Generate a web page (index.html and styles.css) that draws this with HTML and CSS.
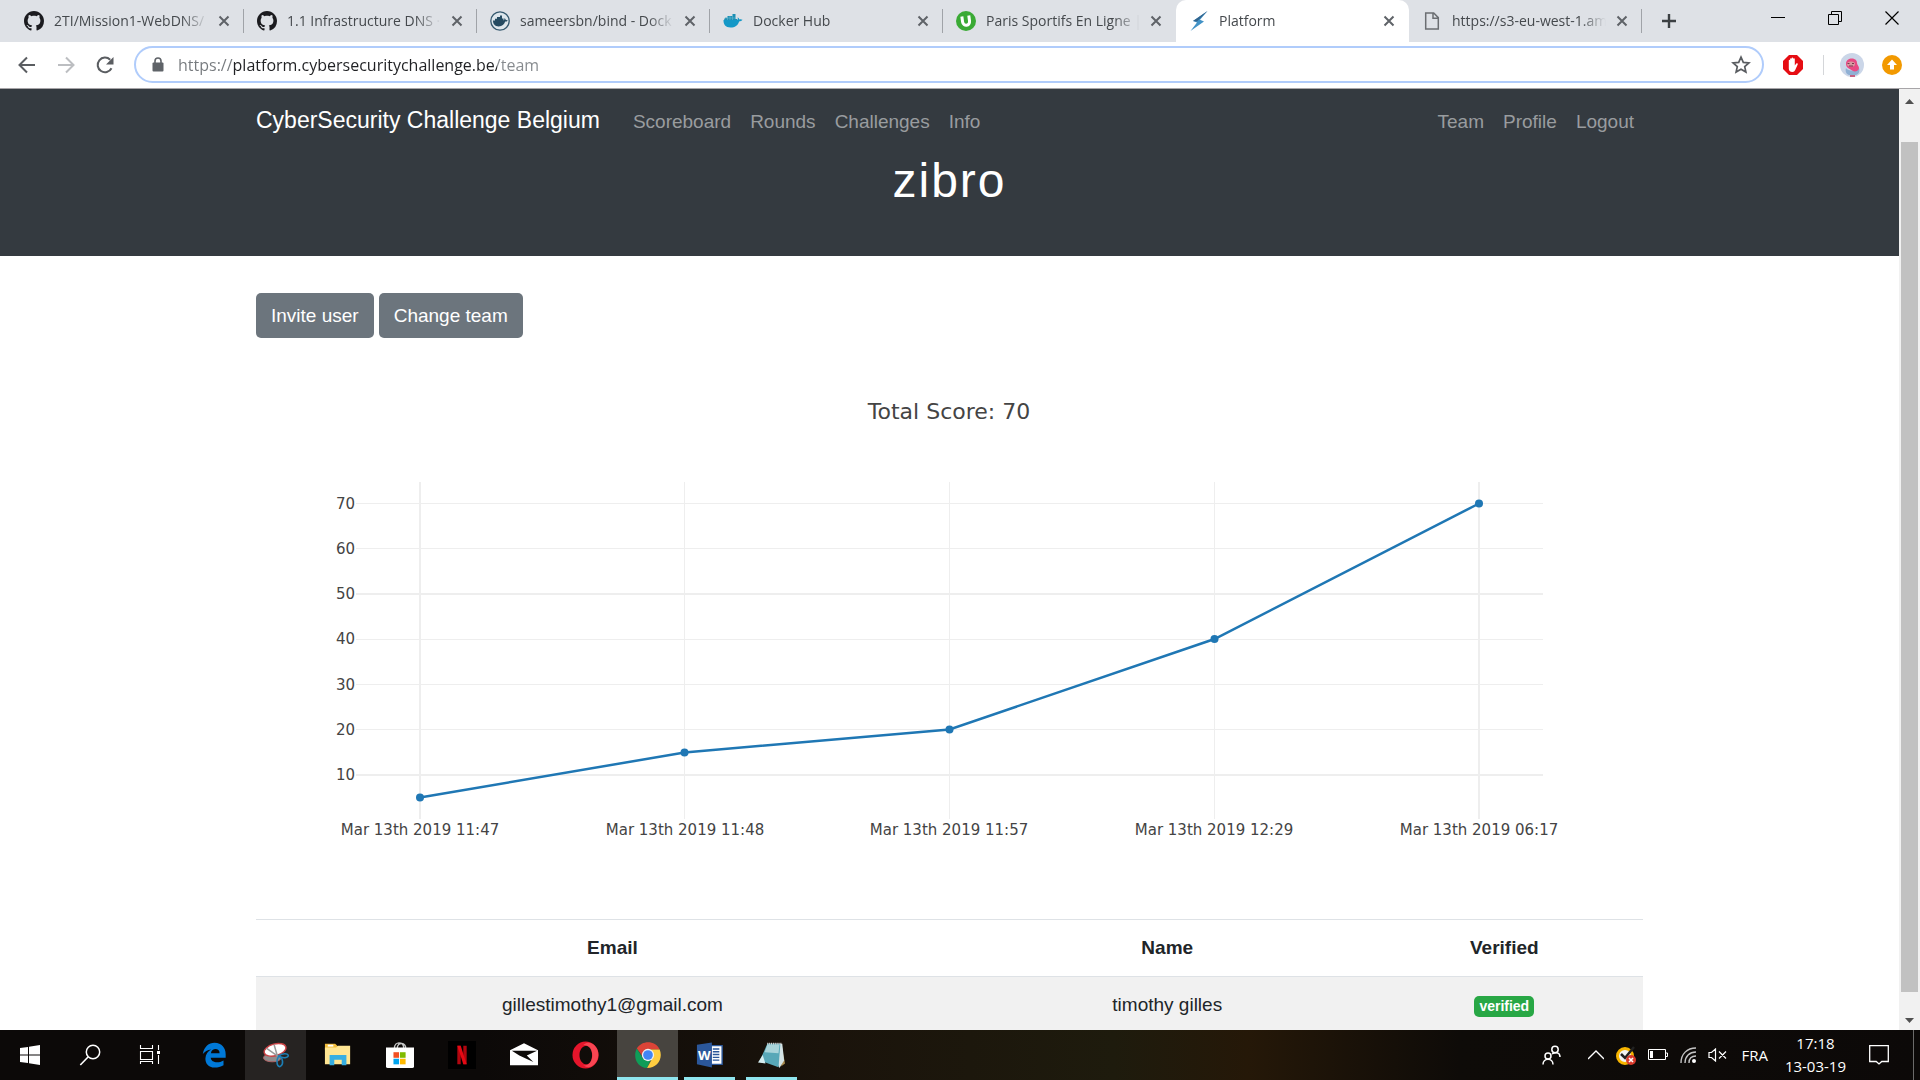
FILE: index.html
```html
<!DOCTYPE html>
<html lang="en">
<head>
<meta charset="utf-8">
<meta name="viewport" content="width=device-width, initial-scale=1">
<title>Platform</title>
<link rel="stylesheet" href="styles.css">
</head>
<body>
<svg class="defs" aria-hidden="true">
  <symbol id="github" viewBox="0 0 16 16"><path fill="#1b1b1f" d="M8 0C3.58 0 0 3.58 0 8c0 3.54 2.29 6.53 5.47 7.59.4.07.55-.17.55-.38 0-.19-.01-.82-.01-1.49-2.01.37-2.53-.49-2.69-.94-.09-.23-.48-.94-.82-1.13-.28-.15-.68-.52-.01-.53.63-.01 1.08.58 1.23.82.72 1.21 1.87.87 2.33.66.07-.52.28-.87.51-1.07-1.78-.2-3.64-.89-3.64-3.95 0-.87.31-1.59.82-2.15-.08-.2-.36-1.02.08-2.12 0 0 .67-.21 2.2.82.64-.18 1.32-.27 2-.27s1.36.09 2 .27c1.53-1.04 2.2-.82 2.2-.82.44 1.1.16 1.92.08 2.12.51.56.82 1.27.82 2.15 0 3.07-1.87 3.75-3.65 3.95.29.25.54.73.54 1.48 0 1.07-.01 1.93-.01 2.2 0 .21.15.46.55.38A8.01 8.01 0 0 0 16 8c0-4.42-3.58-8-8-8z"/></symbol>
  <symbol id="close" viewBox="0 0 12 12"><path d="M1.500 1.500l9 9M10.500 1.500l-9 9" stroke="#5f6368" stroke-width="2" fill="none"/></symbol>
</svg>

<header class="browser">
  <div class="tabs">
    <div class="tab">
      <svg class="favicon"><use href="#github"/></svg>
      <span class="tab-title">2TI/Mission1-WebDNS/</span>
      <button class="tab-close" aria-label="Close tab"><svg><use href="#close"/></svg></button>
    </div>
    <div class="tab">
      <svg class="favicon"><use href="#github"/></svg>
      <span class="tab-title">1.1 Infrastructure DNS ·</span>
      <button class="tab-close" aria-label="Close tab"><svg><use href="#close"/></svg></button>
    </div>
    <div class="tab">
      <svg class="favicon" viewBox="0 0 20 20"><circle cx="10" cy="10" r="9.200" fill="#dde6ec" stroke="#35596f" stroke-width="1.300"/><path fill="#254b62" d="M3 9.500h2V7.700h2V6h3V4.500h2v3h1.500v2c1-.2 1-1.500.8-2.200 1 .4 1.400 1.200 1.500 1.700.8-.2 1.500 0 2 .4-.6 1-1.600 1.200-2.600 1.200-1 3-3 4.800-6.500 4.800C5 15.400 3 13 3 9.500z"/></svg>
      <span class="tab-title">sameersbn/bind - Dock</span>
      <button class="tab-close" aria-label="Close tab"><svg><use href="#close"/></svg></button>
    </div>
    <div class="tab">
      <svg class="favicon" viewBox="0 0 20 20"><path fill="#1d8fb4" d="M2 6.800h2.500V5h5V3h3v5H14v1H1z"/><path fill="#1498c7" d="M.5 9h13.300c1.200-.3 1.200-1.800.7-2.800 1.100.4 1.700 1.400 1.700 2.200 1.200-.3 2.300-.2 3.300.4-.8 1.300-2 1.600-3.400 1.600C14.800 14.400 12 16.500 7.500 16.500 2.600 16.500.3 13.500.5 9z"/><path d="M4.500 5v4M7 5v4M9.500 3v6M2 7h10.500" stroke="#75bdd0" stroke-width=".5"/></svg>
      <span class="tab-title">Docker Hub</span>
      <button class="tab-close" aria-label="Close tab"><svg><use href="#close"/></svg></button>
    </div>
    <div class="tab">
      <svg class="favicon" viewBox="0 0 20 20"><circle cx="10" cy="10" r="10" fill="#3aaa35"/><path d="M6.500 5v5.500c0 5 7 5 7 0V5" transform="rotate(-8 10 10)" fill="none" stroke="#fff" stroke-width="3"/></svg>
      <span class="tab-title">Paris Sportifs En Ligne |</span>
      <button class="tab-close" aria-label="Close tab"><svg><use href="#close"/></svg></button>
    </div>
    <div class="tab active">
      <svg class="favicon" viewBox="0 0 20 20"><path fill="#4292c6" d="M18.500 0L4 10l4 1.500L1.500 20 15 10.500l-4-1.700z"/><path fill="#33658e" d="M18.500 0L4 10l4 .6z"/></svg>
      <span class="tab-title">Platform</span>
      <button class="tab-close" aria-label="Close tab"><svg><use href="#close"/></svg></button>
    </div>
    <div class="tab">
      <svg class="favicon" viewBox="0 0 20 20"><path d="M3.700 2h8l4.600 4.600V18H3.700zM11 2v5.300h5" fill="none" stroke="#6b6e72" stroke-width="1.500"/></svg>
      <span class="tab-title">https://s3-eu-west-1.am</span>
      <button class="tab-close" aria-label="Close tab"><svg><use href="#close"/></svg></button>
    </div>
    <button class="new-tab" aria-label="New tab"><svg viewBox="0 0 16 16"><path d="M8 1v14M1 8h14" stroke="#3c4043" stroke-width="2.400"/></svg></button>
    <div class="window-controls">
      <button aria-label="Minimize"><svg viewBox="0 0 14 14"><path d="M0 6.500h14" stroke="#000"/></svg></button>
      <button aria-label="Restore"><svg viewBox="0 0 14 14"><path d="M.5 3.500h10v10h-10zM3.500 3.500v-3h10v10h-3" fill="none" stroke="#000"/></svg></button>
      <button aria-label="Close window"><svg viewBox="0 0 14 14"><path d="M.5.5l13 13M13.500.5l-13 13" stroke="#000" stroke-width="1.200"/></svg></button>
    </div>
  </div>
  <div class="toolbar">
    <button class="tool" aria-label="Back"><svg viewBox="0 0 20 20"><path d="M18 10H3M10 2.500L2.500 10l7.500 7.500" fill="none" stroke="#5a5d61" stroke-width="2"/></svg></button>
    <button class="tool" aria-label="Forward"><svg viewBox="0 0 20 20"><path d="M2 10h15M10 2.500l7.500 7.500-7.500 7.500" fill="none" stroke="#bcbec1" stroke-width="2"/></svg></button>
    <button class="tool" aria-label="Reload"><svg viewBox="0 0 20 20"><path d="M16.500 13.200A7.300 7.300 0 1 1 15.200 4.800" fill="none" stroke="#5a5d61" stroke-width="2"/><path d="M18.500 2v7.500H11z" fill="#5a5d61"/></svg></button>
    <div class="omnibox">
      <svg class="lock" viewBox="0 0 12 15"><path d="M3 6V4a3 3 0 0 1 6 0v2" fill="none" stroke="#5f6368" stroke-width="1.600"/><rect x=".5" y="5.500" width="11" height="9" rx="1" fill="#5f6368"/></svg>
      <input class="url" type="text" aria-label="Address" value="https://platform.cybersecuritychallenge.be/team">
      <button class="star" aria-label="Bookmark this page"><svg viewBox="0 0 20 20"><path d="M10 2.200l2.300 5.200 5.600.5-4.200 3.700 1.200 5.500-4.900-2.900-4.900 2.900 1.200-5.500L2.100 7.900l5.600-.5z" fill="none" stroke="#5a5d61" stroke-width="1.700"/></svg></button>
    </div>
    <button class="ext" aria-label="Ad blocker"><svg viewBox="0 0 20 20"><path d="M6 0h8l6 6v8l-6 6H6l-6-6V6z" fill="#e60d13"/><path d="M5.800 11V5.500c0-.9 1.300-.9 1.300 0V4c0-1 1.500-1 1.500 0v-.7c0-1 1.600-1 1.600 0V4c0-1 1.600-1 1.600 0v6.500l1.500-2c.7-.8 1.900 0 1.400.9L12.200 15c-.6 1.200-1.400 2-2.700 2-2.600 0-3.700-1.500-3.700-3.500z" fill="#fff"/></svg></button>
    <span class="divider"></span>
    <button class="ext avatar" aria-label="Profile"><svg viewBox="0 0 24 24"><circle cx="12" cy="12" r="12" fill="#cbd6e8"/><path d="M6 15c2 3 5 2 8 3l5-3c1 3 0 6-3 7H9c-3-1-4-4-3-7z" fill="#8fb0d4"/><path d="M6 11c0-7 11-7 11-1 0 2 2 3 2 5 0 3-4 4-6 3l-5-3c-1-1-2-2-2-4z" fill="#e84a83"/><ellipse cx="11" cy="11" rx="4" ry="2.600" fill="#d79aa0"/><path d="M7.500 10.500h2M12 10.500h2M9 13h4" stroke="#7a3550" stroke-width="1.200"/><path d="M10 23h5" stroke="#c23a61" stroke-width="1.500"/></svg></button>
    <button class="ext" aria-label="Update available"><svg viewBox="0 0 20 20"><circle cx="10" cy="10" r="10" fill="#f29900"/><path d="M10 4.500L15 10h-3v4.500H8V10H5z" fill="#fff"/></svg></button>
  </div>
</header>

<div class="viewport">
  <main class="page">
    <section class="hero">
      <nav class="container navbar">
        <a class="brand" href="#">CyberSecurity Challenge Belgium</a>
        <a href="#">Scoreboard</a>
        <a href="#">Rounds</a>
        <a href="#">Challenges</a>
        <a href="#">Info</a>
        <a class="push" href="#">Team</a>
        <a href="#">Profile</a>
        <a href="#">Logout</a>
      </nav>
      <h1>zibro</h1>
    </section>
    <div class="container">
      <div class="actions">
        <button class="btn">Invite user</button>
        <button class="btn">Change team</button>
      </div>
      <svg class="chart" viewBox="0 0 1387 562" role="img" aria-label="Total score over time">
        <g class="grid">
          <path d="M428.500 125v337M693.500 125v337M958.500 125v337M100 146.500h1187M100 191.500h1187M100 282.500h1187M100 327.500h1187M100 372.500h1187"/>
          <path class="strong" d="M164 125v337M1223 125v337M100 237h1187M100 418h1187"/>
        </g>
        <path class="line" d="M164 440.500L428.500 395.500L693.500 372.500L958.500 282L1223 146.500"/>
        <g class="dots"><circle cx="164" cy="440.500" r="4"/><circle cx="428.500" cy="395.500" r="4"/><circle cx="693.500" cy="372.500" r="4"/><circle cx="958.500" cy="282" r="4"/><circle cx="1223" cy="146.500" r="4"/></g>
        <text class="title" x="693" y="62">Total Score: 70</text>
        <g class="yticks">
          <text x="99" y="152">70</text><text x="99" y="197">60</text><text x="99" y="242">50</text><text x="99" y="287">40</text><text x="99" y="333">30</text><text x="99" y="378">20</text><text x="99" y="423">10</text>
        </g>
        <g class="xticks">
          <text x="164" y="478">Mar 13th 2019 11:47</text><text x="429" y="478">Mar 13th 2019 11:48</text><text x="693" y="478">Mar 13th 2019 11:57</text><text x="958" y="478">Mar 13th 2019 12:29</text><text x="1223" y="478">Mar 13th 2019 06:17</text>
        </g>
      </svg>
      <table class="members">
        <thead><tr><th class="email">Email</th><th class="name">Name</th><th>Verified</th></tr></thead>
        <tbody><tr><td>gillestimothy1@gmail.com</td><td>timothy gilles</td><td><span class="badge">verified</span></td></tr></tbody>
      </table>
    </div>
  </main>
  <div class="scrollbar" aria-hidden="true">
    <svg viewBox="0 0 17 20"><path d="M4 15h9l-4.500-5z" fill="#505050"/></svg>
    <span class="before"></span><span class="thumb"></span><span class="after"></span>
    <svg viewBox="0 0 17 20"><path d="M4 8h9l-4.500 5z" fill="#505050"/></svg>
  </div>
</div>

<footer class="taskbar">
  <button class="sys" aria-label="Start"><svg viewBox="0 0 30 30"><path fill="#fff" d="M5 8l8-1v7.500H5zM14 6.800L25 5v9.500H14zM5 15.500h8V23l-8-1zM14 15.500h11V25l-11-1.800z"/></svg></button>
  <button class="sys" aria-label="Search"><svg viewBox="0 0 30 30"><circle cx="18" cy="12" r="6.700" fill="none" stroke="#fff" stroke-width="1.500"/><path d="M13.300 16.800L5.300 25" stroke="#fff" stroke-width="1.600"/></svg></button>
  <button class="sys" aria-label="Task view"><svg viewBox="0 0 30 30"><path d="M5.500 5v3.500h12V5M5.500 11.500h12v8h-12zM5.500 24v-2.500h12V24M23.500 5v5M23.500 15v9" fill="none" stroke="#fff" stroke-width="1.100"/><path d="M22 11h3v3h-3z" fill="#fff"/></svg></button>
  <div class="apps">
    <button class="app" aria-label="Edge"><svg viewBox="0 0 30 30"><path fill="#0078d7" d="M3 14C4.500 6 9.500 2 15.500 2 23.500 2 27.500 8 27.500 14v4H11.500c.5 5.500 8.500 6 13.700 2.800V26c-3 1.800-6 2.500-9.500 2.500C9 28.500 5.500 24 5.800 18.500 6 14 8.500 11 12 9c-4 .5-7 2.300-9 5zM11.700 13h9.300c.2-5.800-8.500-6-9.300 0z"/></svg></button>
    <button class="app snip" aria-label="Snipping Tool"><svg viewBox="0 0 30 30"><ellipse cx="11" cy="18" rx="9.500" ry="4.300" fill="#8f8c8d" stroke="#b06062"/><ellipse cx="14" cy="9.500" rx="12" ry="6.300" transform="rotate(-15 14 9.500)" fill="#fff" stroke="#c94245" stroke-width="1.500"/><path d="M13 4l4 14M5 8l13 9" stroke="#9a9a9a" stroke-width="1.600"/><path d="M18 16c4-3 9-3 10-1s-4 5-10 1zm0 0c5 3 5 9 2 11s-6-4-2-11z" fill="none" stroke="#1c7fb6" stroke-width="1.700"/></svg></button>
    <button class="app" aria-label="File Explorer"><svg viewBox="0 0 30 30"><path fill="#f3bd3b" d="M1 3h11l3 3v4H1z"/><path fill="#fff" d="M4 4h6v2H4z"/><path fill="#ffe592" d="M1 7h12l2-2h13v20H1z"/><path fill="#36aee2" d="M6 15h18v11h-5v-6h-8v6H6z"/></svg></button>
    <button class="app" aria-label="Store"><svg viewBox="0 0 30 30"><path d="M9 8C9 0 19 0 19 8M12 8c0-8 10-6 9 0" fill="none" stroke="#c7c7c7" stroke-width="1.500"/><path fill="#fff" d="M0 7h30v20a2 2 0 0 1-2 2H2a2 2 0 0 1-2-2z"/><path fill="#f25022" d="M8 12h6v6H8z"/><path fill="#7fba00" d="M15 12h6v6h-6z"/><path fill="#00a4ef" d="M8 19h6v6H8z"/><path fill="#ffb900" d="M15 19h6v6h-6z"/></svg></button>
    <button class="app" aria-label="Netflix"><svg viewBox="0 0 30 30"><rect width="30" height="30" fill="#000"/><path d="M10 5h3.600v20H10zM16.400 5H20v20h-3.600z" fill="#b1060f"/><path d="M10 5h3.600L20 25h-3.600z" fill="#e50914"/></svg></button>
    <button class="app" aria-label="Mail"><svg viewBox="0 0 30 30"><path fill="#fff" d="M0 10l15-7.500L30 10v16H0z"/><path fill="#0d0a08" d="M2 10.500h27L18 15.500l7 7-15-7z"/></svg></button>
    <button class="app" aria-label="Opera"><svg viewBox="0 0 30 30"><path fill="#e5152b" fill-rule="evenodd" d="M14.500.5a14 14.500 0 1 0 0 29 14 14.500 0 1 0 0-29zm1 4.500c4 0 6 4.500 6 10s-2 10-6 10-7.500-4-7.500-10 3.500-10 7.500-10z"/><path fill="#ff5560" d="M12 4c5-4 10-2 13 1.500 5 6 4 14-1 19.500-4 4-8 4-12 1 12 2 14-21 0-22z" opacity=".75"/></svg></button>
    <button class="app open current" aria-label="Chrome"><svg viewBox="0 0 30 30"><path fill="#db4437" d="M3 8C9-1.500 23-.5 27.500 9H15l-6 7z"/><path fill="#0f9d58" d="M3 8l6.500 10.500L18 20l-4 9C3 28.500-1.500 17 3 8z"/><path fill="#ffcd40" d="M27.500 9C31.500 19 25 29 14 29l6-11-2-9z"/><circle cx="15" cy="15" r="6.600" fill="#f1f1f1"/><circle cx="15" cy="15" r="5.200" fill="#4285f4"/></svg></button>
    <button class="app open" aria-label="Word"><svg viewBox="0 0 30 30"><path fill="#fff" stroke="#2b579a" stroke-width="1.500" d="M16 5h12v20H16z"/><path d="M18 8.500h7M18 11.500h7M18 14.500h7M18 17.500h7M18 20.500h7" stroke="#2b579a" stroke-width="1.500"/><path fill="#2b579a" d="M1 4l16-2.500v27L1 25z"/><text class="logo-letter" x="9" y="20">W</text></svg></button>
    <button class="app open" aria-label="Notepad"><svg viewBox="0 0 30 30"><path d="M25 4l4 20-4 3z" fill="#a98a4d"/><path d="M10 3h16l2 18-5 8z" fill="#d3e3e6"/><path d="M10 3h14l-2 25L2 21z" fill="#58a8b8"/><path d="M10 4h13l-1 9-15-1z" fill="#a9d4da"/><path d="M0 23l5-8 3 9z" fill="#d5edf0"/><path d="M10 3h16" stroke="#dedede" stroke-width="2" stroke-dasharray="1 1"/></svg></button>
  </div>
  <div class="tray">
    <svg class="people" viewBox="0 0 20 20"><g fill="none" stroke="#fff" stroke-width="1.500"><circle cx="13" cy="4.500" r="3.200"/><circle cx="6" cy="11" r="3"/><path d="M1 19.500c0-7 10-7 10 0M10 9c3-2 8-2 8 3"/></g></svg>
    <svg class="chev" viewBox="0 0 16 10"><path d="M0 9l8-8 8 8" fill="none" stroke="#fff" stroke-width="1.300"/></svg>
    <svg class="norton" viewBox="0 0 20 20"><circle cx="9" cy="11" r="7.500" fill="#f4f4f4" stroke="#f7b500" stroke-width="3"/><path d="M5 9l4 4 9-11" stroke="#222" stroke-width="2.500" fill="none"/><circle cx="15" cy="15" r="5" fill="#d83a2c"/><path d="M13 13l4 4M17 13l-4 4" stroke="#fff" stroke-width="1.600"/></svg>
    <svg class="battery" viewBox="0 0 20 12"><path d="M.5.5h17v10H.5zM18 4h1.500v3.500H18" fill="none" stroke="#fff"/><path d="M2 2h3v7H2z" fill="#fff"/></svg>
    <svg class="wifi" viewBox="0 0 16 16"><g fill="none" stroke="#c4c4c4" stroke-width="1.400"><path d="M1 16C1 7 7 1 16 1M5 16c0-6.500 4.500-11 11-11M9 16c0-4.500 2.500-7 7-7"/></g><circle cx="14" cy="14" r="2" fill="#fff"/></svg>
    <svg class="volume" viewBox="0 0 20 14"><path d="M1 4.500h2.500L7.500 1v12L3.500 9.500H1zM11 3.500l7 7M18 3.500l-7 7" fill="none" stroke="#fff" stroke-width="1.200"/></svg>
    <span class="lang">FRA</span>
    <div class="clock"><time>17:18</time><span>13-03-19</span></div>
    <svg class="notice" viewBox="0 0 20 20"><path d="M.7.700h18.600v15.800h-6.500L10 19l-2.800-2.500H.7z" fill="none" stroke="#fff" stroke-width="1.300"/></svg>
    <span class="peek"></span>
  </div>
</footer>
</body>
</html>
```
FILE: styles.css
```css
* { box-sizing: border-box; }

body {
  margin: 0;
  height: 100vh;
  overflow: hidden;
  display: flex;
  flex-direction: column;
  background: #fff;
  font-family: "Liberation Sans", Arial, sans-serif;
  font-size: 19px;
  color: #212529;
}

button {
  border: 0;
  padding: 0;
  background: none;
  font: inherit;
  color: inherit;
}

svg { display: block; flex: none; }
.defs { display: none; }

/* Browser window */
.browser {
  flex: none;
  font-family: "Open Sans", "Noto Sans", sans-serif;
  border-bottom: 1px solid #a7a5a8;
}

.tabs {
  display: flex;
  height: 42px;
  padding-left: 11px;
  background: #dee1e6;
}

.tab {
  flex: 0 1 233px;
  min-width: 0;
  display: flex;
  align-items: center;
  gap: 10px;
  padding: 0 14px 1px 13px;
  background: linear-gradient(#a0a3a8, #a0a3a8) right 9px / 1px 24px no-repeat;
  font-size: 14px;
  color: #45494d;
}

.tab:has(+ .active) { background: none; }

.tab.active {
  background: #fff;
  border-radius: 10px 10px 0 0;
}

.favicon { width: 20px; height: 20px; }

.tab-title {
  flex: 1;
  min-width: 0;
  overflow: hidden;
  white-space: nowrap;
  mask-image: linear-gradient(to right, #000 calc(100% - 26px), transparent);
}

.tab-close svg { width: 12px; height: 12px; }

.new-tab {
  width: 54px;
  display: grid;
  place-items: center;
}

.new-tab svg { width: 16px; height: 16px; }

.window-controls {
  margin-left: auto;
  display: flex;
  height: 36px;
}

.window-controls button {
  width: 57px;
  display: grid;
  place-items: center;
}

.window-controls svg { width: 14px; height: 14px; }

.toolbar {
  display: flex;
  align-items: center;
  height: 46px;
  padding: 0 18px 1px 17px;
  background: #fff;
}

.tool { width: 39px; display: grid; place-items: center start; }
.tool svg { width: 20px; height: 20px; }

.omnibox {
  flex: 1;
  display: flex;
  align-items: center;
  gap: 14px;
  height: 37px;
  margin-right: 19px;
  padding: 0 11px 0 16px;
  border: 2px solid #b0ccfb;
  border-radius: 19px;
}

.lock { width: 12px; height: 15px; }

.url {
  flex: 1;
  min-width: 0;
  border: 0;
  padding: 0;
  outline: 0;
  font: 16px "Open Sans", "Noto Sans", sans-serif;
  color: #202124;
  background: linear-gradient(to right, #75797d 55px, #202124 55px 319px, #85898d 319px) text;
  -webkit-text-fill-color: transparent;
}

.star svg { width: 20px; height: 20px; }
.ext svg { width: 20px; height: 20px; }
.avatar { margin-right: 18px; }
.ext.avatar svg { width: 24px; height: 24px; }

.divider {
  width: 1px;
  height: 20px;
  margin: 0 16px 0 20px;
  background: #d4d6d9;
}

/* Web page */
.viewport {
  flex: 1;
  min-height: 0;
  display: flex;
}

.page {
  flex: 1;
  min-width: 0;
  overflow: hidden;
}

.container {
  max-width: 1387px;
  margin: 0 auto;
}

.hero {
  height: 167px;
  background: #343a40;
  text-align: center;
}

.navbar {
  display: flex;
  align-items: baseline;
  gap: 19px;
  height: 64px;
  padding: 18px 9px 0 0;
}

.navbar a {
  color: #999c9f;
  text-decoration: none;
}

.navbar .brand {
  margin-right: 14px;
  font-size: 23px;
  color: #fff;
}

.navbar .push { margin-left: auto; }

h1 {
  margin: 0;
  font-size: 48px;
  font-weight: 400;
  line-height: 56px;
  letter-spacing: 2px;
  color: #fff;
}

.actions {
  display: flex;
  gap: 5px;
  padding: 37px 0 19px;
}

.btn {
  height: 45px;
  padding: 0 15px;
  border-radius: 5px;
  background: #6c757d;
  color: #fff;
}

.chart {
  width: 100%;
  height: auto;
  font-family: "DejaVu Sans", Verdana, sans-serif;
  font-size: 15px;
  fill: #444;
}

.grid path {
  fill: none;
  stroke: #eee;
  stroke-width: 1;
  shape-rendering: crispEdges;
}

.grid .strong { stroke-width: 2; }
.line { fill: none; stroke: #1f77b4; stroke-width: 2.5; }
.dots { fill: #1f77b4; }
.title { font-size: 22px; text-anchor: middle; }
.xticks { text-anchor: middle; }
.yticks { text-anchor: end; }

.members {
  width: 100%;
  table-layout: fixed;
  border-collapse: collapse;
  text-align: center;
}

.members th,
.members td {
  height: 57px;
  padding: 0;
  border-top: 1px solid #dee2e6;
}

.email { width: 51.4%; }
.name { width: 28.6%; }
.members tbody tr { background: #f1f1f1; }

.badge {
  display: inline-block;
  padding: 2px 5px;
  border-radius: 5px;
  background: #28a745;
  font-size: 14px;
  font-weight: 700;
  line-height: 17px;
  color: #fff;
}

.scrollbar {
  width: 21px;
  display: flex;
  flex-direction: column;
  padding: 0 2px;
  background: #f1f1f1;
}

.scrollbar svg { height: 20px; width: 17px; }
.before { flex: 33; }
.thumb { flex: 850; background: #c1c1c1; }
.after { flex: 18; }

/* Taskbar */
.taskbar {
  flex: none;
  display: flex;
  height: 50px;
  background: linear-gradient(to right, #0c0908 25%, #1a130b 43%, #1e1b0d 58%, #251808 65%, #0e0b08 76%, #0c0908);
  color: #fff;
  font-family: "Open Sans", "Noto Sans", sans-serif;
  font-size: 15px;
}

.sys,
.app {
  display: grid;
  place-items: center;
}

.sys { width: 60px; }
.sys svg { width: 30px; height: 30px; }

.apps {
  display: flex;
  gap: 1px;
  margin-left: 3px;
}

.app { width: 61px; }
.app svg { width: 28px; height: 28px; }
.snip { background: #262322; }
.open { background: linear-gradient(#8fe5ee, #8fe5ee) center bottom / 51px 3px no-repeat; }
.current { background: linear-gradient(#8fe5ee, #8fe5ee) center bottom / 61px 3px no-repeat #47443f; }

.logo-letter {
  font: 700 14px "Open Sans", sans-serif;
  fill: #fff;
  text-anchor: middle;
}

.tray {
  margin-left: auto;
  display: flex;
  align-items: center;
  gap: 12px;
}

.people { width: 20px; height: 20px; margin-right: 14px; }
.chev { width: 16px; height: 10px; }
.norton { width: 20px; height: 20px; }
.battery { width: 20px; height: 12px; }
.wifi { width: 16px; height: 16px; }
.volume { width: 20px; height: 14px; }

.lang { margin: 0 5px 0 1px; }

.clock {
  display: flex;
  flex-direction: column;
  align-items: center;
  line-height: 23px;
}

.notice { width: 20px; height: 20px; margin: 0 12px 0 11px; }

.peek {
  align-self: stretch;
  width: 7px;
  border-left: 1px solid #6b6a69;
}
```
